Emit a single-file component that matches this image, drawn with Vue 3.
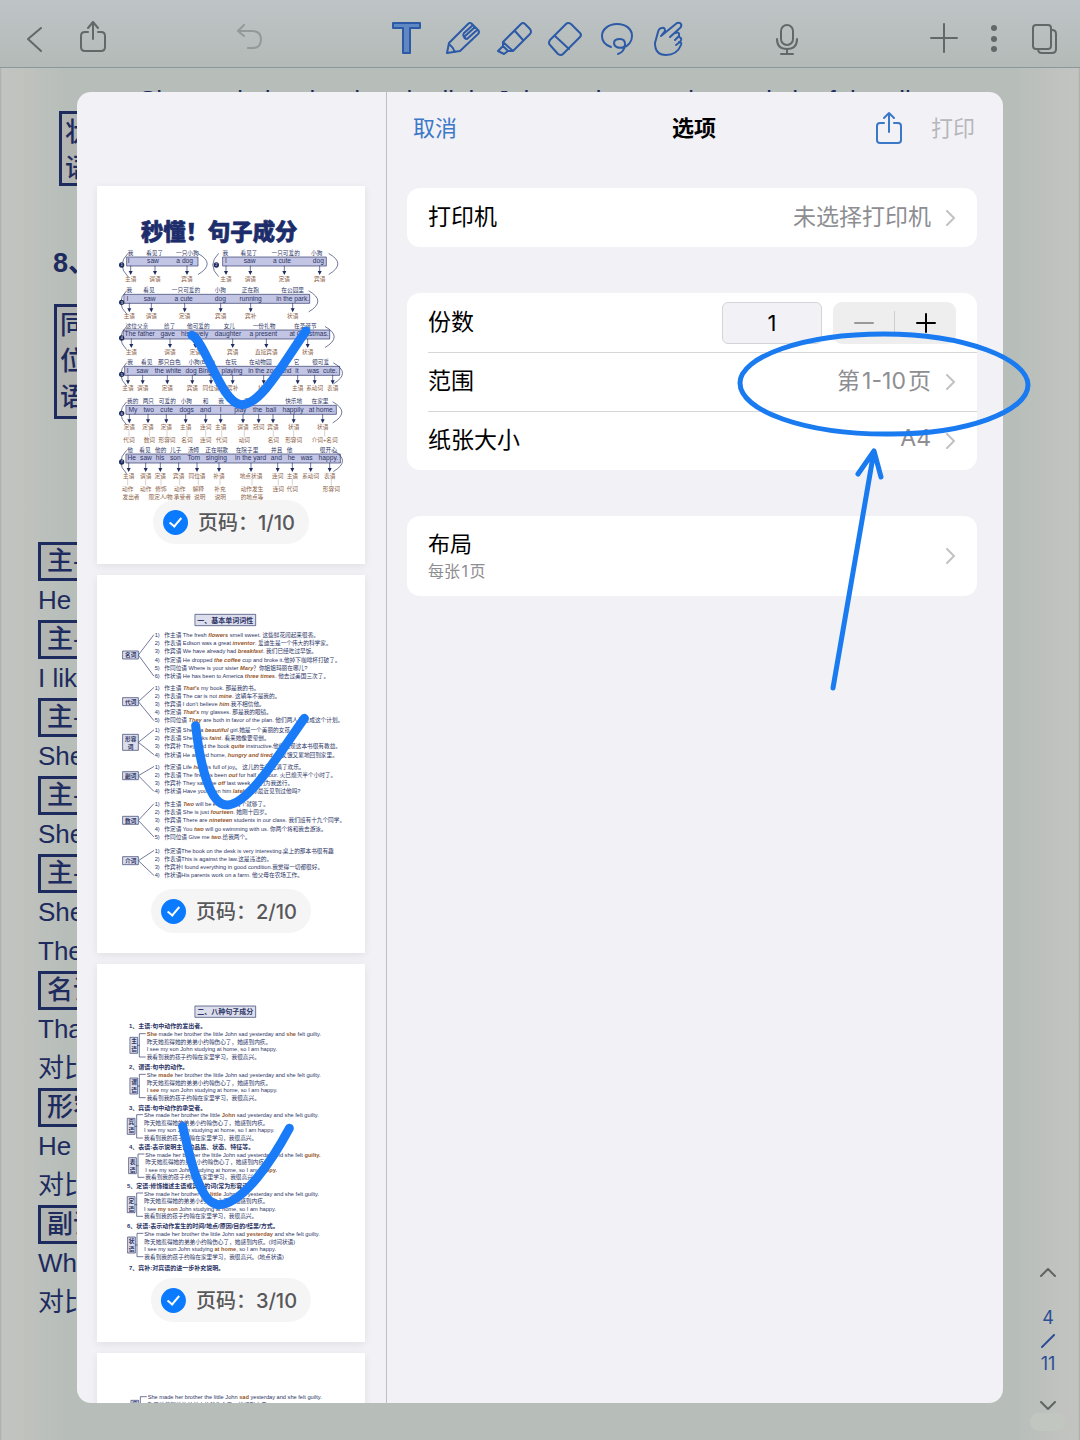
<script setup>
import { ref } from 'vue'

// --- 背景文档 ---
const docLines = [
  { t: '主-谓-宾', box: true },
  { t: 'He runs.' },
  { t: '主-谓-宾', box: true },
  { t: 'I like it.' },
  { t: '主-谓-宾', box: true },
  { t: 'She is a girl.' },
  { t: '主-谓-宾', box: true },
  { t: 'She gave me.' },
  { t: '主-谓-宾', box: true },
  { t: 'She made her.' },
  { t: 'The boy ran.' },
  { t: '名词', box: true },
  { t: 'That is my book.' },
  { t: '对比' },
  { t: '形容词', box: true },
  { t: 'He is happy.' },
  { t: '对比' },
  { t: '副词', box: true },
  { t: 'What a day.' },
  { t: '对比' },
]

// --- 打印选项 ---
const copies = ref(1)
const selected = ref([true, true, true, true])

// --- 第 1 页：句子成分图 ---
const rows = [
  {
    n: 1, x1: 90, x2: 303, y: 213, l: 72, r: 332,
    zh: [[101, '我'], [173, '看见了'], [271, '一只小狗']],
    en: [[95, 'I'], [168, 'saw'], [263, 'a dog']],
    role: [[101, '主语'], [174, '谓语'], [270, '宾语']],
  },
  {
    n: 2, x1: 378, x2: 688, y: 213, l: 344, r: 724,
    zh: [[385, '我'], [456, '看见了'], [566, '一只可爱的'], [659, '小狗']],
    en: [[387, 'I'], [458, 'saw'], [555, 'a cute'], [664, 'dog']],
    role: [[387, '主语'], [460, '谓语'], [562, '定语'], [668, '宾语']],
  },
  {
    n: 3, x1: 82, x2: 638, y: 325, l: 68, r: 664,
    zh: [[97, '我'], [156, '看见'], [267, '一只可爱的'], [370, '小狗'], [460, '正在跑'], [587, '在公园里']],
    en: [[91, 'I'], [158, 'saw'], [260, 'a cute'], [370, 'dog'], [461, 'running'], [587, 'in the park.']],
    role: [[97, '主语'], [163, '谓语'], [263, '定语'], [371, '宾语'], [461, '宾补'], [587, '状语']],
  },
  {
    n: 4, x1: 80, x2: 698, y: 432, l: 68, r: 713,
    zh: [[120, '这位父亲'], [218, '给了'], [304, '他可爱的'], [397, '女儿'], [501, '一份礼物'], [625, '在圣诞节']],
    en: [[128, 'The father'], [212, 'gave'], [293, 'his lovely'], [393, 'daughter'], [499, 'a present'], [636, 'at Christmas.']],
    role: [[103, '主语'], [219, '谓语'], [295, '定语'], [407, '宾语'], [508, '直接宾语'], [632, '状语']],
  },
  {
    n: 5, x1: 84, x2: 728, y: 541, l: 68, r: 738,
    zh: [[99, '我'], [149, '看见'], [217, '那只白色'], [314, '小狗(Bing)'], [402, '在玩'], [490, '在动物园'], [599, '它'], [671, '很可爱']],
    en: [[92, 'I'], [136, 'saw'], [213, 'the white'], [305, 'dog Bing'], [405, 'playing'], [497, 'in the zoo'], [567, 'and'], [600, 'it'], [676, 'was  cute.']],
    role: [[93, '主语'], [137, '谓语'], [211, '定语'], [286, '宾语'], [342, '同位语'], [407, '宾补'], [500, '状语'], [602, '主语'], [653, '系动词'], [707, '表语']],
  },
  {
    n: 6, x1: 88, x2: 718, y: 658, l: 68, r: 736,
    zh: [[107, '我的'], [154, '两只'], [211, '可爱的'], [268, '小狗'], [326, '和'], [372, '我'], [460, '玩球'], [590, '快乐地'], [669, '在家里']],
    en: [[108, 'My'], [155, 'two'], [209, 'cute'], [269, 'dogs'], [326, 'and'], [371, 'I'], [430, 'play'], [482, 'the'], [522, 'ball'], [588, 'happily'], [674, 'at home.']],
    role: [[97, '定语'], [153, '定语'], [208, '定语'], [266, '主语'], [326, '连词'], [371, '主语'], [438, '谓语'], [485, '冠词'], [528, '宾语'], [590, '状语'], [677, '状语']],
    sub: [[96, '代词'], [157, '数词'], [210, '形容词'], [270, '名词'], [326, '连词'], [374, '代词'], [442, '动词'], [529, '名词'], [590, '形容词'], [683, '介词+名词']],
  },
  {
    n: 7, x1: 88, x2: 730, y: 804, l: 68, r: 738,
    zh: [[99, '他'], [144, '看见'], [191, '他的'], [236, '儿子'], [289, '汤姆'], [359, '正在唱歌'], [450, '在院子里'], [539, '并且'], [578, '他'], [694, '很开心']],
    en: [[104, 'He'], [147, 'saw'], [189, 'his'], [235, 'son'], [290, 'Tom'], [358, 'singing'], [461, 'in the yard'], [538, 'and'], [583, 'he'], [629, 'was'], [694, 'happy.']],
    role: [[95, '主语'], [146, '谓语'], [190, '定语'], [245, '宾语'], [300, '同位语'], [366, '补语'], [462, '地点状语'], [542, '连词'], [586, '主语'], [641, '系动词'], [698, '表语']],
    sub: [[92, '动作'], [146, '动作'], [192, '修饰'], [248, '动作'], [304, '解释'], [369, '补充'], [465, '动作发生'], [544, '连词'], [586, '代词'], [703, '形容词']],
    sub2: [[102, '发出者'], [191, '限定人/物'], [256, '承受者'], [308, '说明'], [370, '说明'], [465, '的地点等']],
  },
]

// --- 第 2 页：单词词性，*...* 为强调 ---
const groups = [
  {
    label: ['名词'], y: 240, top: 180,
    lines: [
      '作主语 The fresh *flowers* smell sweet. 这些鲜花闻起来很香。',
      '作表语 Edison was a great *inventor*. 爱迪生是一个伟大的科学家。',
      '作宾语 We have already had *breakfast*. 我们已经吃过早饭。',
      '作定语 He dropped *the coffee* cup and broke it.他掉下咖啡杯打破了。',
      '作同位语 Where is your sister *Mary*？你姐姐玛丽在哪儿?',
      '作状语 He has been to America *three times*. 他去过美国三次了。',
    ],
  },
  {
    label: ['代词'], y: 380, top: 338,
    lines: [
      '作主语 *That\'s* my book. 那是我的书。',
      '作表语 The car is not *mine*. 这辆车不是我的。',
      '作宾语 I don\'t believe *him*.我不相信他。',
      '作定语 *That\'s* my glasses. 那是我的眼镜。',
      '作同位语 *They* are both in favor of the plan. 他们两人都赞成这个计划。',
    ],
  },
  {
    label: ['形容', '词'], y: 502, top: 465,
    lines: [
      '作定语 She is a *beautiful* girl.她是一个美丽的女孩。',
      '作表语 She looks *faint*. 看来她像要晕倒。',
      '作宾补 They find the book *quite* instructive.他们发现这本书很有教益。',
      '作状语 He arrived home, *hungry and tired*. 他又饿又累地回到家里。',
    ],
  },
  {
    label: ['副词'], y: 602, top: 575,
    lines: [
      '作定语 Life *here* is full of joy。 这儿的生活充满了欢乐。',
      '作表语 The fire has been *out* for half an hour. 火已熄灭半个小时了。',
      '作宾补 They saw me *off* last week. 他们为我送行。',
      '作状语 Have you seen him *lately*? 你最近见到过他吗?',
    ],
  },
  {
    label: ['数词'], y: 736, top: 687,
    lines: [
      '作主语 *Two* will be enough. 两个就够了。',
      '作表语 She is just *fourteen*. 她刚十四岁。',
      '作宾语 There are *nineteen* students in our class. 我们班有十九个同学。',
      '作定语 You *two* will go swimming with us. 你两个将和我去游泳。',
      '作同位语 Give me *two*.给我两个。',
    ],
  },
  {
    label: ['介词'], y: 857, top: 827,
    lines: [
      '作定语The book on the desk is very interesting.桌上的那本书很有趣',
      '作表语This is against the law.这是违法的。',
      '作宾补I found everything in good condition.我觉得一切都很好。',
      '作状语His parents work on a farm. 他父母在农场工作。',
    ],
  },
]

// --- 第 3、4 页：八种句子成分 ---
const zhA = '昨天她惹得她的弟弟小约翰伤心了，她感到内疚。'
const zhB = '我看到我的孩子约翰在家里学习，我很高兴。'
const happy = 'I see my son John studying at home, so I am happy.'
const sections = [
  {
    title: '1、主语:句中动作的发出者。', tx: 96, ty: 185, x: 149, top: 211, label: '主语',
    lines: ['*She* made her brother the little John sad yesterday and *she* felt guilty.', zhA, happy, zhB],
  },
  {
    title: '2、谓语:句中的动作。', tx: 96, ty: 310, x: 149, top: 333, label: '谓语',
    lines: ['She *made* her brother the little John sad yesterday and she felt guilty.', zhA, 'I *see* my son John studying at home, so I am happy.', zhB],
  },
  {
    title: '3、宾语:句中动作的承受者。', tx: 96, ty: 431, x: 141, top: 454, label: '宾语',
    lines: ['She made her brother the little *John* sad yesterday and she felt guilty.', zhA, happy, zhB],
  },
  {
    title: '4、表语:表示说明主语的品质、状态、特征等。', tx: 96, ty: 548, x: 145, top: 572, label: '表语',
    lines: ['She made her brother the little John sad yesterday and she felt *guilty.*', zhA, 'I see my son John studying at home, so I am *happy.*', zhB],
  },
  {
    title: '5、定语:修饰描述主语或宾语的词(常为形容词)', tx: 90, ty: 667, x: 141, top: 689, label: '定语',
    lines: ['She made her brother the *little* John sad yesterday and she felt guilty.', zhA, 'I see *my son* John studying at home, so I am happy.', zhB],
  },
  {
    title: '6、状语:表示动作发生的时间/地点/原因/目的/结果/方式。', tx: 90, ty: 786, x: 142, top: 810, label: '状语',
    lines: ['She made her brother the little John sad *yesterday* and she felt guilty.', zhA + '(时间状语)', 'I see my son John studying *at home*, so I am happy.', zhB + '(地点状语)'],
  },
  { title: '7、宾补:对宾语的进一步补充说明。', tx: 96, ty: 911 },
]
const sectionsNext = [
  {
    x: 152, top: 133, label: '宾补',
    lines: ['She made her brother the little John *sad* yesterday and she felt guilty.', zhA, happy, zhB],
  },
]

const pages = [
  { kind: 'diagram', mark: 'M285 448C325 468 375 656 434 656C495 656 565 520 627 435' },
  { kind: 'words', title: '一、基本单词词性', titleY: 118, mark: 'M296 452C305 530 330 690 390 690C455 690 550 530 622 430' },
  { kind: 'parts', title: '二、八种句子成分', titleY: 126, sections, mark: 'M257 487C275 560 305 722 365 722C440 722 530 580 577 493' },
  { kind: 'parts', sections: sectionsNext },
]

// 拆分强调片段，奇数下标为强调
function split(s) {
  return s.split('*')
}
</script>

<template>
  <div class="screen">
    <header class="toolbar">
      <div class="group left">
        <button class="tool" aria-label="返回">
          <svg viewBox="0 0 40 40"><path d="M27 9L14 20L27 32" /></svg>
        </button>
        <button class="tool" aria-label="分享">
          <svg viewBox="0 0 40 40"><path d="M15 13H12Q8 13 8 17V28Q8 32 12 32H28Q32 32 32 28V17Q32 13 28 13H25M20 20V3M15 9L20 3L25 9" /></svg>
        </button>
      </div>
      <div class="group undo">
        <button class="tool faded" aria-label="撤销" disabled>
          <svg viewBox="0 0 40 40"><path d="M14 6L8 12L14 17M8 12H22Q31 12 31 20Q31 29 23 29H18" /></svg>
        </button>
      </div>
      <div class="group tools">
        <button class="tool blue" aria-label="文本">
          <svg viewBox="0 0 40 40"><path class="fill" d="M6 4H33V9H23V34H16V9H6Z" /></svg>
        </button>
        <button class="tool blue" aria-label="铅笔">
          <svg viewBox="0 0 40 40"><path d="M8 34L10 24L29 5Q31 3 33 5L39 11Q41 13 39 15L21 32ZM10 25Q14 28 16 33M34 6L25 14Q23 17 26 18M29 19Q26 21 25 18L36 8M28 20L38 11" /></svg>
        </button>
        <button class="tool blue" aria-label="荧光笔">
          <svg viewBox="0 0 40 40"><path d="M12 23L30 5Q32 3 34 5L39 10Q41 13 39 15L22 32H17L12 27ZM12 23L22 32M24 12L32 21M12 27L7 32L13 35L17 32" /></svg>
        </button>
        <button class="tool blue" aria-label="橡皮">
          <svg viewBox="0 0 40 40"><path d="M23 5Q25 3 28 5L37 14Q39 16 37 18L20 35Q18 37 15 35L7 26Q5 24 7 21ZM12 17L26 30" /></svg>
        </button>
        <button class="tool blue" aria-label="套索">
          <svg viewBox="0 0 40 40"><path d="M16 28C10 26 7 22 7 17C7 10 14 5 22 5C31 5 37 10 37 17C37 23 33 27 29 28C24 30 19 28 19 24C19 21 22 20 25 20C28 20 30 22 30 25C30 30 27 34 23 35" /></svg>
        </button>
        <button class="tool blue" aria-label="手势">
          <svg viewBox="0 0 40 40"><path d="M14 17L30 4Q33 3 34 5Q35 7 33 9L23 18M14 17L18 12Q18 8 15 9Q12 9 11 13L8 24Q8 36 19 36Q30 36 34 26Q35 23 32 23M28 14Q33 12 32 17L28 21M32 18Q36 19 33 23L29 26" /></svg>
        </button>
      </div>
      <div class="group mic">
        <button class="tool" aria-label="录音">
          <svg viewBox="0 0 40 40"><rect x="15" y="6" width="12" height="20" rx="6" /><path d="M11 20Q11 30 21 30Q31 30 31 20M21 30V35M15 35H27" /></svg>
        </button>
      </div>
      <div class="group right">
        <button class="tool" aria-label="添加">
          <svg viewBox="0 0 40 40"><path d="M7 19H33M20 5V33" /></svg>
        </button>
        <button class="tool" aria-label="更多">
          <svg class="dots" viewBox="0 0 40 40"><circle cx="20" cy="9" r="3" /><circle cx="20" cy="20" r="3" /><circle cx="20" cy="30" r="3" /></svg>
        </button>
        <button class="tool" aria-label="页面">
          <svg viewBox="0 0 40 40"><rect x="9" y="6" width="18" height="24" rx="3" /><path d="M28 11Q32 11 32 15V30Q32 34 28 34H18Q14 34 14 30" /></svg>
        </button>
      </div>
    </header>

    <main class="stage">
      <article class="doc">
        <p class="doc-first">She made her brother the little John sad yesterday and she felt guilty.</p>
        <div class="tall state">状语</div>
        <h2>8、</h2>
        <div class="tall appos">同位语</div>
        <p v-for="(line, i) in docLines" :key="i" :class="{ boxed: line.box }">{{ line.t }}</p>
      </article>

      <nav class="pager">
        <button aria-label="上一页"><svg viewBox="0 0 16 9"><path d="M1 8L8 1L15 8" /></svg></button>
        <span class="pages-count">
          <span>4</span>
          <svg viewBox="0 0 14 14"><path d="M1 13L13 1" /></svg>
          <span>11</span>
        </span>
        <button aria-label="下一页"><svg viewBox="0 0 16 9"><path d="M1 1L8 8L15 1" /></svg></button>
        <i class="chip"></i>
      </nav>

      <section class="dialog" role="dialog" aria-label="选项">
        <aside class="preview">
          <div v-for="(page, p) in pages" :key="p" class="sheet">
            <svg class="paper" viewBox="0 0 804 1134">
              <!-- 句子成分图 -->
              <g v-if="page.kind === 'diagram'">
                <text class="headline" x="132" y="163">秒懂！句子成分</text>
                <g v-for="row in rows" :key="row.n">
                  <rect class="band" :x="row.x1" :y="row.y" :width="row.x2 - row.x1" height="27" />
                  <path class="curve" :d="`M${row.l + 20} ${row.y - 10}Q${row.l - 14} ${row.y + 24} ${row.l + 20} ${row.y + 58}M${row.r - 28} ${row.y - 10}Q${row.r + 26} ${row.y + 20} ${row.r - 28} ${row.y + 52}`" />
                  <circle class="num" :cx="row.n === 2 ? 358 : 74" :cy="row.y + 24" r="8" />
                  <text class="num-text" :x="row.n === 2 ? 358 : 74" :y="row.y + 28">{{ row.n }}</text>
                  <text v-for="(w, i) in row.zh" :key="'z' + i" class="zh" :x="w[0]" :y="row.y - 6">{{ w[1] }}</text>
                  <text v-for="(w, i) in row.en" :key="'e' + i" class="en" :x="w[0]" :y="row.y + 19">{{ w[1] }}</text>
                  <g v-for="(w, i) in row.role" :key="'r' + i">
                    <path class="stem" :d="`M${w[0]} ${row.y + 27}V${row.y + 44}`" />
                    <path class="tip" :d="`M${w[0] - 6} ${row.y + 42}h12l-6 12z`" />
                    <text class="role" :x="w[0]" :y="row.y + 72">{{ w[1] }}</text>
                  </g>
                  <g v-for="(w, i) in row.sub" :key="'s' + i">
                    <path class="thin" :d="`M${w[0]} ${row.y + 76}V${row.y + 93}`" />
                    <text class="role" :x="w[0]" :y="row.y + 110">{{ w[1] }}</text>
                  </g>
                  <text v-for="(w, i) in row.sub2" :key="'t' + i" class="role" :x="w[0]" :y="row.y + 134">{{ w[1] }}</text>
                </g>
              </g>

              <g v-if="page.title">
                <rect class="tag" x="295" :y="page.titleY" width="181" height="34" />
                <text class="tag-title" x="385" :y="page.titleY + 25">{{ page.title }}</text>
              </g>

              <!-- 单词词性 -->
              <g v-if="page.kind === 'words'">
                <g v-for="g in groups" :key="g.top">
                  <path class="curve" :d="`M170 ${g.top}L124 ${g.y}L170 ${g.top + (g.lines.length - 1) * 49 / 2}`" />
                  <rect class="tag" x="78" :y="g.y - g.label.length * 12" width="46" :height="g.label.length * 24" />
                  <text v-for="(t, i) in g.label" :key="t" class="tag-label" x="101" :y="g.y + 7 + i * 24 - (g.label.length - 1) * 12">{{ t }}</text>
                  <g v-for="(line, i) in g.lines" :key="i">
                    <text class="line" x="173" :y="g.top + 6 + i * 49 / 2">{{ i + 1 }})</text>
                    <text class="line" x="202" :y="g.top + 6 + i * 49 / 2"><tspan v-for="(s, k) in split(line)" :key="k" :class="{ hot: k % 2, slant: k % 2 }">{{ s }}</tspan></text>
                  </g>
                </g>
              </g>

              <!-- 句子成分说明 -->
              <g v-if="page.kind === 'parts'">
                <g v-for="(s, n) in page.sections" :key="n">
                  <text v-if="s.title" class="section" :x="s.tx" :y="s.ty + 6">{{ s.title }}</text>
                  <g v-if="s.lines">
                    <rect class="tag" :x="s.x - 49" :y="s.top + 9" width="22" height="48" />
                    <text class="tag-label" :x="s.x - 38" :y="s.top + 27">{{ s.label[0] }}</text>
                    <text class="tag-label" :x="s.x - 38" :y="s.top + 51">{{ s.label[1] }}</text>
                    <path class="curve" :d="`M${s.x - 4} ${s.top - 2}h-18v70h18M${s.x - 27} ${s.top + 33}h5`" />
                    <text v-for="(line, i) in s.lines" :key="i" class="line" :x="s.x" :y="s.top + 6 + i * 45 / 2"><tspan v-for="(w, k) in split(line)" :key="k" :class="{ hot: k % 2 }">{{ w }}</tspan></text>
                  </g>
                </g>
              </g>

              <path v-if="page.mark" class="mark" :d="page.mark" />
            </svg>
            <label class="badge">
              <input v-model="selected[p]" type="checkbox" />
              <span>页码：{{ p + 1 }}/10</span>
            </label>
          </div>
        </aside>

        <div class="options">
          <div class="options-head">
            <button class="link">取消</button>
            <h1>选项</h1>
            <div class="actions">
              <button class="share" aria-label="分享">
                <svg viewBox="0 0 28 34"><path d="M9 12H5Q2 12 2 15V29Q2 32 5 32H23Q26 32 26 29V15Q26 12 23 12H19M14 21V2M9 7L14 2L19 7" /></svg>
              </button>
              <button class="link off" disabled>打印</button>
            </div>
          </div>

          <div class="card">
            <button class="row">
              <span class="name">打印机</span>
              <span class="value">未选择打印机</span>
              <svg class="chev" viewBox="0 0 10 16"><path d="M1 1L8 8L1 15" /></svg>
            </button>
          </div>

          <div class="card">
            <div class="row">
              <label class="name" for="copies">份数</label>
              <input id="copies" v-model="copies" class="copies" type="text" />
              <div class="stepper">
                <button aria-label="减少" :disabled="copies <= 1" @click="copies--">
                  <svg viewBox="0 0 20 20"><path d="M1 10H19" /></svg>
                </button>
                <button aria-label="增加" @click="copies++">
                  <svg viewBox="0 0 20 20"><path d="M1 10H19M10 1V19" /></svg>
                </button>
              </div>
            </div>
            <button class="row">
              <span class="name">范围</span>
              <span class="value">第&hairsp;1-10&hairsp;页</span>
              <svg class="chev" viewBox="0 0 10 16"><path d="M1 1L8 8L1 15" /></svg>
            </button>
            <button class="row">
              <span class="name">纸张大小</span>
              <span class="value">A4</span>
              <svg class="chev" viewBox="0 0 10 16"><path d="M1 1L8 8L1 15" /></svg>
            </button>
          </div>

          <div class="card">
            <button class="row layout">
              <span class="stack">
                <span>布局</span>
                <small>每张&hairsp;1&hairsp;页</small>
              </span>
              <svg class="chev" viewBox="0 0 10 16"><path d="M1 1L8 8L1 15" /></svg>
            </button>
          </div>
        </div>
      </section>

      <!-- 手绘圈和箭头 -->
      <svg class="ink" viewBox="0 0 300 370">
        <path d="M149 7C230 7 293 32 293 58C293 84 232 108 151 107C70 107 5 84 5 56C5 30 68 7 149 7Z" />
        <path d="M98 361L139 124M123 147L139 124L146 150" />
      </svg>
    </main>
  </div>
</template>

<style>
body {
  margin: 0;
}
</style>

<style scoped>
.screen {
  display: flex;
  flex-direction: column;
  height: 100vh;
  overflow: hidden;
  color: #000;
  font-family: Inter, 'Noto Sans CJK SC', sans-serif;
  font-size: 22px;
}

button {
  padding: 0;
  border: none;
  background: none;
  color: inherit;
  font: inherit;
  cursor: pointer;
}

svg {
  display: block;
  fill: none;
  stroke: currentColor;
  stroke-linecap: round;
  stroke-linejoin: round;
}

/* 工具栏 */
.toolbar {
  display: flex;
  flex: none;
  box-sizing: border-box;
  height: 68px;
  padding: 19px 16px 0 14px;
  border-bottom: 1px solid #89979a;
  background: linear-gradient(#bec4c6, #b3bab7);
  color: #626867;
}

.group {
  display: flex;
  justify-content: flex-end;
}

.left {
  gap: 19px;
}

.undo {
  flex: 117 0 auto;
}

.tools {
  flex: 117 0 auto;
  gap: 12px;
}

.mic {
  flex: 79 0 auto;
}

.right {
  flex: 118 0 auto;
  gap: 10px;
}

.tool {
  width: 40px;
  height: 40px;
}

.tool svg {
  width: 40px;
  height: 40px;
  overflow: visible;
  stroke-width: 2;
}

.tool .dots {
  fill: currentColor;
  stroke: none;
}

.faded {
  color: #929998;
}

.blue {
  color: #2d5aa6;
}

.fill {
  fill: #5f87c2;
}

/* 背景文档 */
.stage {
  position: relative;
  display: grid;
  flex: 1;
  grid-template: minmax(0, 1fr) / minmax(0, 1fr);
  min-height: 0;
  background: linear-gradient(90deg, #a8aeae 0, #c3c4c1 2px, #c0c2be 24px, #b7beb9 64px, #b7beb9 calc(100% - 64px), #c0c2be calc(100% - 24px), #c3c4c1 calc(100% - 2px), #a8aeae 100%);
}

.doc,
.dialog,
.pager {
  grid-area: 1 / 1;
}

.doc {
  padding: 20px 0 0 38px;
  overflow: hidden;
  color: #1d2b5e;
  font-family: 'Liberation Sans', 'Noto Sans CJK SC', sans-serif;
  font-size: 26px;
  line-height: 39px;
  white-space: nowrap;
}

.doc p {
  box-sizing: border-box;
  height: 39px;
  margin: 0;
}

.doc .doc-first {
  height: 23px;
  margin-left: 101px;
  line-height: 24px;
}

.doc h2 {
  margin: 58px 0 21px 15px;
  font-size: 27px;
}

.doc .boxed {
  width: 200px;
  padding-left: 6px;
  border: 3px solid #1d2b5e;
  background: #b1b4b0;
  font-weight: 500;
  line-height: 33px;
}

.tall {
  box-sizing: border-box;
  width: 38px;
  border: 3px solid #1d2b5e;
  background: #b1b4b0;
  font-weight: 500;
  line-height: 36px;
  text-align: center;
  white-space: normal;
  word-break: break-all;
}

.state {
  height: 75px;
  margin-left: 21px;
}

.appos {
  height: 115px;
  margin: 0 0 123px 16px;
}

/* 页码导航 */
.pager {
  display: flex;
  flex-direction: column;
  align-items: center;
  align-self: end;
  justify-self: end;
  width: 40px;
  padding: 0 12px 9px 0;
  color: #5f6564;
}

.pager svg {
  width: 16px;
  stroke-width: 2;
}

.pages-count {
  display: flex;
  flex-direction: column;
  align-items: center;
  gap: 4px;
  margin: 29px 0 25px;
  color: #2b4e97;
  font-size: 18px;
  line-height: 24px;
}

.pages-count svg {
  width: 14px;
}

.chip {
  width: 36px;
  height: 18px;
  margin-top: 3px;
  border-radius: 9px;
  background: #c1c6c1;
}

/* 打印对话框 */
.dialog {
  display: flex;
  z-index: 1;
  margin: 24px 77px 37px;
  overflow: hidden;
  border-radius: 14px;
  background: #f2f2f6;
}

.preview {
  display: flex;
  flex: none;
  flex-direction: column;
  gap: 11px;
  box-sizing: border-box;
  width: 310px;
  padding: 94px 21px 0 20px;
  overflow: hidden;
  border-right: 1px solid #bfbfc3;
}

.sheet {
  position: relative;
  flex: none;
  background: #fff;
  box-shadow: 0 2px 8px rgba(0, 0, 0, 0.08);
}

.paper {
  width: 268px;
  height: 378px;
  stroke: none;
  font-family: 'Liberation Sans', 'Noto Sans CJK SC', sans-serif;
  color: #2c3566;
}

.paper text {
  fill: currentColor;
  font-size: 17px;
  white-space: pre;
}

.paper .headline {
  fill: #1d2d6b;
  stroke: #1d2d6b;
  stroke-width: 2;
  font-size: 67px;
  font-weight: 900;
}

.paper .zh,
.paper .en,
.paper .role,
.paper .num-text,
.paper .tag-title,
.paper .tag-label {
  text-anchor: middle;
}

.paper .en {
  font-size: 20px;
}

.paper .role {
  fill: #8b6248;
}

.paper .num-text {
  fill: #fff;
  font-size: 11px;
}

.paper .tag-title {
  font-size: 21px;
  font-weight: 700;
}

.paper .tag-label {
  font-weight: 700;
}

.paper .section {
  font-size: 18px;
  font-weight: 700;
}

.hot {
  fill: #96562a;
  font-weight: 700;
}

.slant {
  font-style: italic;
}

.band {
  fill: #c3c5e4;
  stroke: #2c3566;
  stroke-width: 2;
}

.tag {
  fill: #dcdeec;
  stroke: #2c3566;
  stroke-width: 2;
}

.num,
.tip {
  fill: #1d2b5e;
}

.curve,
.stem {
  stroke: #2c3566;
  stroke-width: 2;
}

.thin {
  stroke: #8b7a70;
  stroke-width: 1;
}

.mark {
  stroke: #1a7bf8;
  stroke-width: 27;
}

.badge {
  position: absolute;
  bottom: 20px;
  left: 50%;
  display: flex;
  align-items: center;
  gap: 10px;
  height: 44px;
  padding: 0 14px 0 10px;
  border-radius: 22px;
  background: #f5f5f6;
  color: #58585b;
  font-size: 20px;
  font-weight: 500;
  white-space: nowrap;
  transform: translateX(-50%);
}

.badge span {
  padding-bottom: 2px;
}

.badge input {
  display: grid;
  width: 25px;
  height: 25px;
  margin: 0;
  border: 2px solid #b4b4b8;
  border-radius: 50%;
  appearance: none;
  place-items: center;
}

.badge input:checked {
  border-color: #0a7aff;
  background: #0a7aff;
}

.badge input:checked::after {
  width: 5px;
  height: 10px;
  margin-bottom: 3px;
  border: solid #fff;
  border-width: 0 2px 2px 0;
  content: '';
  transform: rotate(40deg);
}

.options {
  display: flex;
  flex: 1;
  flex-direction: column;
  gap: 46px;
  min-width: 0;
  padding: 14px 26px 0 20px;
}

.options-head {
  display: grid;
  grid-template-columns: 1fr auto 1fr;
  align-items: center;
  height: 44px;
  margin: 0 2px -8px 6px;
}

.options-head h1 {
  margin: 0;
  padding-bottom: 4px;
  font-size: 22px;
  font-weight: 700;
}

.link {
  justify-self: start;
  padding-bottom: 4px;
  color: #3c78c8;
}

.off {
  color: #b7b7bb;
}

.actions {
  display: flex;
  gap: 28px;
  align-items: center;
  justify-content: flex-end;
}

.share {
  color: #3c78c8;
}

.share svg {
  width: 28px;
  height: 34px;
  stroke-width: 2;
}

.card {
  border-radius: 13px;
  background: #fff;
}

.row {
  position: relative;
  display: flex;
  align-items: center;
  box-sizing: border-box;
  width: 100%;
  height: 59px;
  padding: 0 21px;
  text-align: left;
}

.row + .row::before {
  position: absolute;
  top: 0;
  right: 0;
  left: 21px;
  height: 1px;
  background: #d6d6d9;
  content: '';
}

.name,
.value {
  padding-bottom: 5px;
  font-size: 23px;
}

.value {
  margin-left: auto;
  color: #8e8e92;
}

.chev {
  width: 10px;
  height: 16px;
  margin-left: 15px;
  color: #c2c2c5;
  stroke-width: 2;
}

.copies {
  box-sizing: border-box;
  width: 100px;
  height: 42px;
  margin: 0 11px 0 auto;
  padding: 0;
  border: 1px solid #d4d4d8;
  border-radius: 6px;
  background: #f2f2f6;
  color: #000;
  font: inherit;
  text-align: center;
}

.stepper {
  display: flex;
  align-items: center;
  width: 123px;
  height: 42px;
  border-radius: 9px;
  background: #eeeeef;
}

.stepper button {
  display: grid;
  flex: 1;
  height: 24px;
  place-items: center;
}

.stepper button + button {
  border-left: 1px solid #cfcfd2;
}

.stepper button:disabled {
  color: #99999c;
}

.stepper svg {
  width: 20px;
  height: 20px;
  stroke-width: 2;
}

.layout {
  height: 80px;
}

.layout .chev {
  margin-left: auto;
}

.stack {
  display: flex;
  flex-direction: column;
  line-height: 30px;
}

.stack small {
  color: #8e8e92;
  font-size: 16px;
  line-height: 24px;
}

.ink {
  position: absolute;
  z-index: 2;
  top: 259px;
  right: 45px;
  width: 300px;
  height: 370px;
  color: #1a7bf0;
  stroke-width: 5;
  pointer-events: none;
}
</style>
